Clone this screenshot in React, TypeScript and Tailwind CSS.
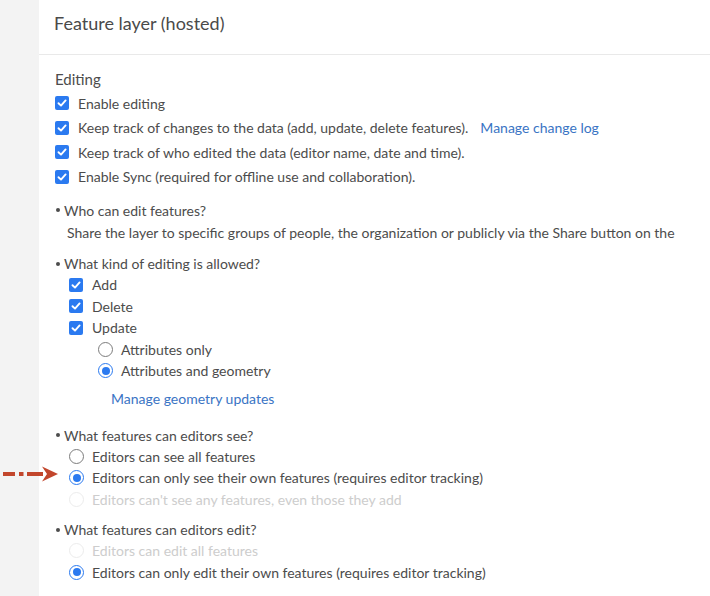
import React from "react";

const CheckBox = () => (
  <span className="flex h-[14px] w-[14px] shrink-0 items-center justify-center rounded-[2px] bg-[#2b7af0]">
    <svg width="10" height="10" viewBox="0 0 10 10" fill="none">
      <path d="M1.5 5.2 4 7.6 8.6 2.4" stroke="white" strokeWidth="1.9" strokeLinecap="round" strokeLinejoin="round" />
    </svg>
  </span>
);

type RadioState = "off" | "on" | "disabled";

const Radio = ({ state }: { state: RadioState }) => {
  if (state === "on") {
    return (
      <span className="flex h-[15px] w-[15px] shrink-0 items-center justify-center rounded-full border-[1.5px] border-[#2b7af0] bg-white">
        <span className="h-[8px] w-[8px] rounded-full bg-[#2b7af0]" />
      </span>
    );
  }
  return (
    <span
      className={`h-[15px] w-[15px] shrink-0 rounded-full border-[1.5px] bg-white ${
        state === "disabled" ? "border-[#ececec]" : "border-[#7c7c7c]"
      }`}
    />
  );
};

const CheckRow = ({ label, children }: { label: string; children?: React.ReactNode }) => (
  <div className="flex h-[24.5px] items-center gap-[9px]">
    <CheckBox />
    <span>{label}</span>
    {children}
  </div>
);

const SubCheck = ({ label }: { label: string }) => (
  <div className="flex h-[21.5px] items-center gap-[9px] pl-[14px]">
    <CheckBox />
    <span>{label}</span>
  </div>
);

const RadioRow = ({
  label,
  state,
  indent = "pl-[14px]",
  children,
}: {
  label: string;
  state: RadioState;
  indent?: string;
  children?: React.ReactNode;
}) => (
  <div className={`relative flex h-[21.5px] items-center gap-[8px] ${indent}`}>
    {children}
    <Radio state={state} />
    <span className={state === "disabled" ? "text-[#cdcdcd]" : ""}>{label}</span>
  </div>
);

const Heading = ({ text, className = "" }: { text: string; className?: string }) => (
  <div className={`flex h-[21px] items-center ${className}`}>
    <span className="ml-[1px] mr-[4px] h-[4px] w-[4px] shrink-0 rounded-full bg-[#4c4c4c]" />
    <span>{text}</span>
  </div>
);

// red annotation arrow pointing at the selected option
const Arrow = () => (
  <svg
    className="absolute left-[-52px] top-[-2px]"
    width="58"
    height="18"
    viewBox="0 0 58 18"
  >
    <g fill="#c2462c">
      <rect x="0" y="7" width="12" height="4" />
      <rect x="16" y="7" width="4.5" height="4" />
      <rect x="24" y="7" width="16" height="4" />
      <path d="M39 1.5 55 9 39 16.5 44 9Z" />
    </g>
  </svg>
);

export default function App() {
  return (
    <div className="flex min-h-[596px] w-full overflow-hidden bg-white font-['Lato',_sans-serif] text-[14px] text-[#4c4c4c]">
      <div className="w-[39px] shrink-0 bg-[#f3f3f3]" />
      <div className="min-w-0 flex-1 whitespace-nowrap">
        <div className="h-[55px] border-b border-[#e9e9e9] pl-[15px] pt-[12px] text-[18px] leading-[22px] text-[#4a4a4a]">
          Feature layer (hosted)
        </div>

        <div className="pl-[16px] pt-[14px]">
          <div className="flex h-[20px] items-center text-[15px]">Editing</div>

          <div className="mt-[2px]">
            <CheckRow label="Enable editing" />
            <CheckRow label="Keep track of changes to the data (add, update, delete features).">
              <span className="ml-[3px] text-[#3a74c4]">Manage change log</span>
            </CheckRow>
            <CheckRow label="Keep track of who edited the data (editor name, date and time)." />
            <CheckRow label="Enable Sync (required for offline use and collaboration)." />
          </div>

          <Heading text="Who can edit features?" className="mt-[10px] h-[22px]" />
          <div className="flex h-[22px] items-center overflow-hidden pl-[12px]">
            Share the layer to specific groups of people, the organization or publicly via the Share button on the
          </div>

          <Heading text="What kind of editing is allowed?" className="mt-[10px]" />
          <SubCheck label="Add" />
          <SubCheck label="Delete" />
          <SubCheck label="Update" />
          <RadioRow label="Attributes only" state="off" indent="pl-[43px]" />
          <RadioRow label="Attributes and geometry" state="on" indent="pl-[43px]" />
          <div className="mt-[6px] flex h-[22px] items-center pl-[56px] text-[#3a74c4]">
            Manage geometry updates
          </div>

          <Heading text="What features can editors see?" className="mt-[15px]" />
          <RadioRow label="Editors can see all features" state="off" />
          <RadioRow label="Editors can only see their own features (requires editor tracking)" state="on">
            <Arrow />
          </RadioRow>
          <RadioRow label="Editors can't see any features, even those they add" state="disabled" />

          <Heading text="What features can editors edit?" className="mt-[9px]" />
          <RadioRow label="Editors can edit all features" state="disabled" />
          <RadioRow label="Editors can only edit their own features (requires editor tracking)" state="on" />
        </div>
      </div>
    </div>
  );
}
